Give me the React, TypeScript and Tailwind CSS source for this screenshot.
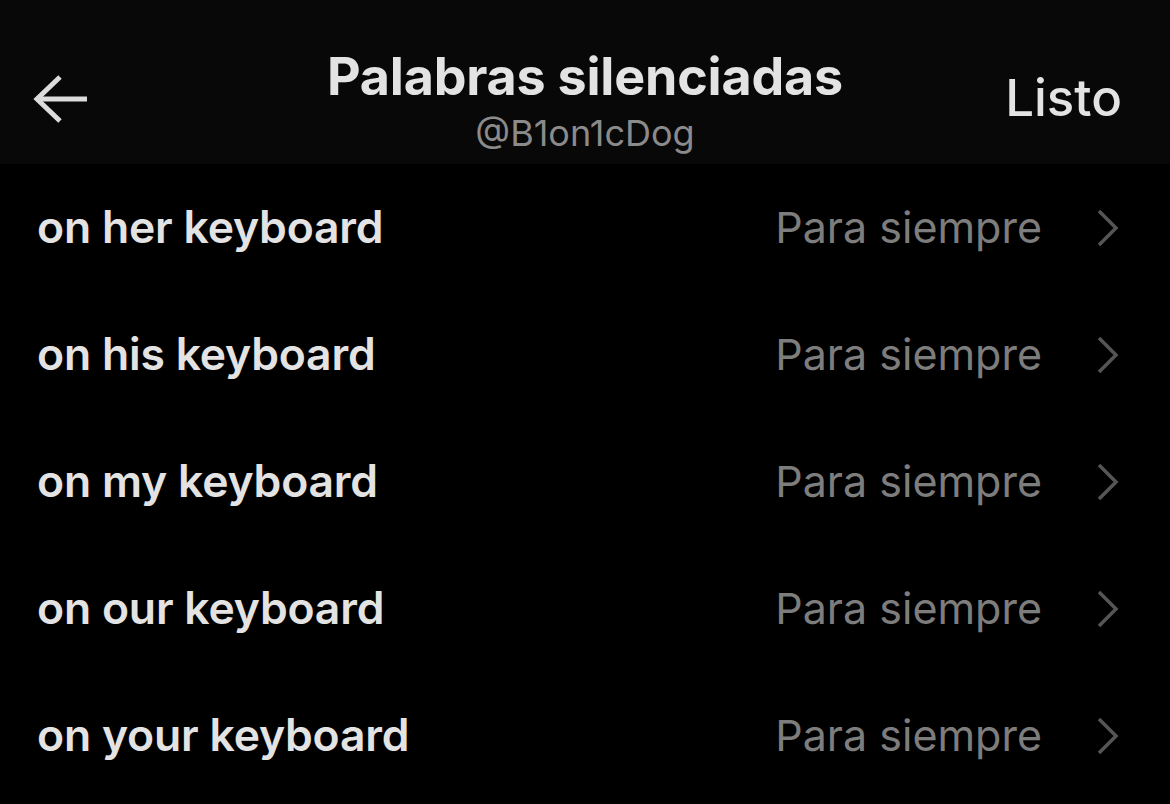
const rows = ['on her keyboard', 'on his keyboard', 'on my keyboard', 'on our keyboard', 'on your keyboard'];

export default function App() {
  return (
    <div className="w-[1170px] h-[804px] bg-black overflow-hidden" style={{ fontFamily: 'Inter, "Noto Sans", sans-serif' }}>
      {/* cabecera */}
      <header className="h-[164px] bg-[#080808] flex items-start pl-[31px] pr-[48px]">
        <div className="w-[147px] mt-[74px]">
          <svg width="60" height="50" viewBox="0 0 60 50" fill="none" stroke="#dcdcdc" strokeWidth="5">
            <path d="M56 25H5" />
            <path d="M29 3L6 25L29 47" />
          </svg>
        </div>
        <div className="flex-1 flex flex-col items-center pt-[47px]">
          <div className="text-[52px] leading-[60px] font-bold text-[#e3e3e3] tracking-[-0.2px]">Palabras silenciadas</div>
          <div className="mt-[5px] text-[36px] leading-[42px] text-[#8b8b8b]">@B1on1cDog</div>
        </div>
        <div className="w-[130px] mt-[68px] flex justify-end text-[51px] leading-[60px] font-medium text-[#e3e3e3]">Listo</div>
      </header>
      <ul>
        {rows.map((r) => (
          <li key={r} className="h-[127px] flex items-center pl-[37px] pr-[49px]">
            <span className="flex-1 text-[44.5px] font-semibold text-[#e3e3e3] tracking-[-0.2px]">{r}</span>
            <span className="text-[43px] text-[#7d7d7d] mr-[53px]">Para siempre</span>
            <svg width="26" height="40" viewBox="0 0 26 40" fill="none" stroke="#555555" strokeWidth="3.5">
              <path d="M4 3L21 20L4 37" />
            </svg>
          </li>
        ))}
      </ul>
    </div>
  );
}
